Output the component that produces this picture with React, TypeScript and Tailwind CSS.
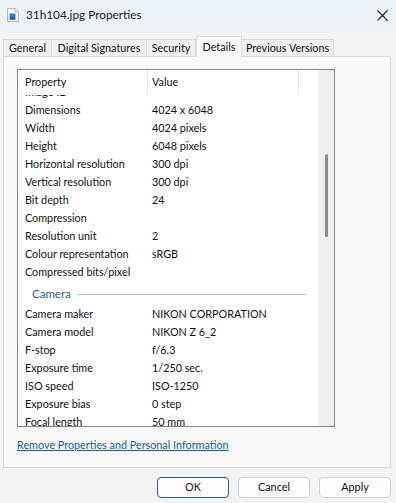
import React from "react";

const before: [string, string][] = [
  ["Dimensions", "4024 x 6048"],
  ["Width", "4024 pixels"],
  ["Height", "6048 pixels"],
  ["Horizontal resolution", "300 dpi"],
  ["Vertical resolution", "300 dpi"],
  ["Bit depth", "24"],
  ["Compression", ""],
  ["Resolution unit", "2"],
  ["Colour representation", "sRGB"],
  ["Compressed bits/pixel", ""],
];

const camera: [string, string][] = [
  ["Camera maker", "NIKON CORPORATION"],
  ["Camera model", "NIKON Z 6_2"],
  ["F-stop", "f/6.3"],
  ["Exposure time", "1/250 sec."],
  ["ISO speed", "ISO-1250"],
  ["Exposure bias", "0 step"],
  ["Focal length", "50 mm"],
];

function Row({ p, v }: { p: string; v: string }) {
  return (
    <div className="flex h-[18px] items-center shrink-0">
      <div className="w-[129px] pl-[7px] whitespace-nowrap overflow-hidden">{p}</div>
      <div className="pl-[5px] whitespace-nowrap">{v}</div>
    </div>
  );
}

function Tab({ label, w, selected }: { label: string; w: number; selected?: boolean }) {
  if (selected) {
    return (
      <div
        className="h-[21px] -mb-px flex items-start pt-[2px] justify-center whitespace-nowrap bg-[#f9f9f9] border border-b-0 border-[#dadada] relative z-10"
        style={{ width: w }}
      >
        {label}
      </div>
    );
  }
  return (
    <div
      className="h-[17px] flex items-center justify-center whitespace-nowrap bg-[#f0f0f0] border border-b-0 border-l-0 border-[#dadada] first:border-l"
      style={{ width: w }}
    >
      {label}
    </div>
  );
}

export default function App() {
  return (
    <div
      className="w-[396px] h-[503px] bg-[#f3f3f3] text-[10.8px] text-[#111111] flex flex-col overflow-hidden"
      style={{ fontFamily: '"Segoe UI", Lato, "Liberation Sans", Arial, sans-serif' }}
    >
      {/* Title bar */}
      <div className="h-[30px] bg-[#eef3f8] flex items-center shrink-0">
        <svg width="12" height="14" viewBox="0 0 12 14" className="ml-[7px] mr-[7px]">
          <path d="M0.5 0.5 H8 L11.5 4 V13.5 H0.5 Z" fill="#ffffff" stroke="#a9b4c0" />
          <path d="M8 0.5 V4 H11.5" fill="#e6ebf0" stroke="#a9b4c0" />
          <rect x="2.5" y="5.5" width="6" height="6" fill="#2f78d0" />
          <path d="M2.5 11.5 L5 8.5 L8.5 11.5 Z" fill="#1a4f9a" />
        </svg>
        <span className="text-[11.8px] text-[#1a1a1a]">31h104.jpg Properties</span>
        <div className="flex-1" />
        <svg width="11" height="11" viewBox="0 0 11 11" className="mr-[8px]">
          <path d="M0.5 0.5 L10.5 10.5 M10.5 0.5 L0.5 10.5" stroke="#1a1a1a" strokeWidth="1.1" />
        </svg>
      </div>

      {/* Tabs */}
      <div className="flex items-end pl-[3px] mt-[6px] h-[20px] shrink-0">
        <Tab label="General" w={49} />
        <Tab label="Digital Signatures" w={95} />
        <Tab label="Security" w={49} />
        <Tab label="Details" w={46} selected />
        <Tab label="Previous Versions" w={92} />
      </div>

      {/* Panel */}
      <div className="ml-[3px] mr-[5px] h-[412px] bg-[#f9f9f9] border border-[#dadada] flex flex-col shrink-0">
        <div className="ml-[13px] mt-[12px] w-[318px] h-[358px] border border-[#868686] bg-white flex overflow-hidden">
          <div className="flex-1 flex flex-col overflow-hidden">
            {/* header */}
            <div className="h-[25px] flex items-center shrink-0 bg-white relative z-10">
              <div className="w-[129px] pl-[7px]">Property</div>
              <div className="w-[151px] h-full border-l border-[#e5e5e5] pl-[4px] flex items-center">Value</div>
              <div className="h-full border-l border-[#e5e5e5]" />
            </div>
            <div className="flex flex-col -mt-[12px]">
              <Row p="Image ID" v="" />
              {before.map(([p, v]) => (
                <Row key={p} p={p} v={v} />
              ))}
              <div className="h-[24px] flex items-center shrink-0 pt-[2px]">
                <span className="pl-[14px] text-[#1f5fa8] text-[11.5px]">Camera</span>
                <div className="ml-[6px] flex-1 mr-[11px] h-px bg-[#b9c6cc]" />
              </div>
              {camera.map(([p, v]) => (
                <Row key={p} p={p} v={v} />
              ))}
            </div>
          </div>
          <div className="w-[16px] bg-[#efeff0] flex flex-col items-center shrink-0">
            <div className="mt-[84px] w-[3px] h-[83px] rounded-full bg-[#8a8a8a]" />
          </div>
        </div>
        <div className="ml-[13px] mt-[10px]">
          <span className="text-[#0e5ca8] underline">Remove Properties and Personal Information</span>
        </div>
      </div>

      {/* Buttons */}
      <div className="flex justify-end gap-[9px] pr-[5px] mt-[9px]">
        <div className="w-[72px] h-[21px] rounded-[4px] border border-[#2a5a86] bg-[#fdfdfd] flex items-center justify-center">OK</div>
        <div className="w-[72px] h-[21px] rounded-[4px] border border-[#d0d0d0] bg-[#fdfdfd] flex items-center justify-center">Cancel</div>
        <div className="w-[72px] h-[21px] rounded-[4px] border border-[#d0d0d0] bg-[#fdfdfd] flex items-center justify-center">Apply</div>
      </div>
    </div>
  );
}
